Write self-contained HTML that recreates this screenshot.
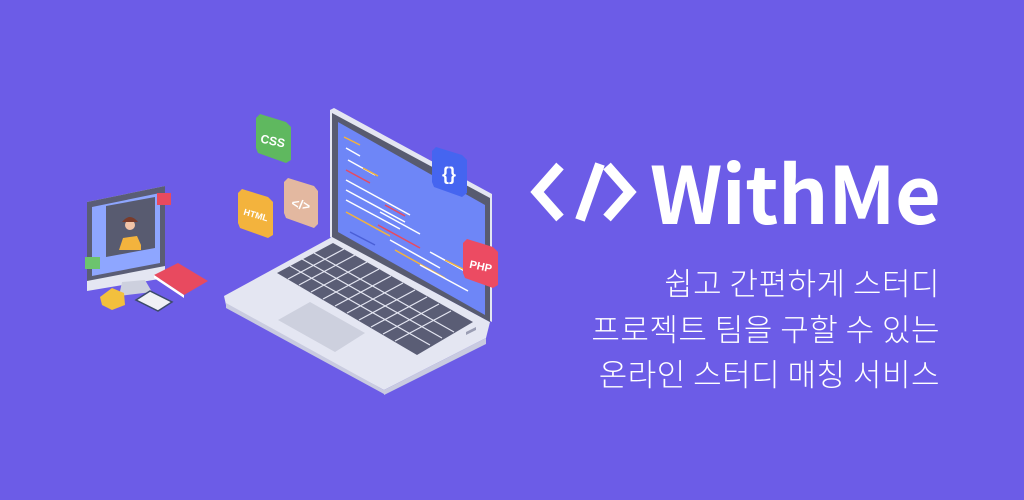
<!DOCTYPE html>
<html><head><meta charset="utf-8"><style>
html,body{margin:0;padding:0}
body{width:1024px;height:500px;background:#6c5ce7;position:relative;overflow:hidden;font-family:"Liberation Sans","Noto Sans CJK KR",sans-serif}
.t{position:absolute;right:84px;color:#fff;font-family:"Noto Sans CJK KR",sans-serif;font-weight:300;font-size:31px;line-height:1;white-space:nowrap;letter-spacing:0.5px}
.logo{position:absolute;left:650px;top:150px;color:#fff;font-family:"Noto Sans CJK KR",sans-serif;font-weight:700;font-size:79px;line-height:1;letter-spacing:-0.5px}
</style></head><body>
<svg width="1024" height="500" style="position:absolute;left:0;top:0">
<g stroke="#fff" stroke-width="10" fill="none" stroke-linecap="butt">
<polyline points="560,166 537,192 560,218"/>
<line x1="600" y1="164" x2="580" y2="220"/>
<polyline points="607,166 630,192 607,218"/>
</g>
<polygon points="224,296 332,237 490,322 486,338 384,390 226,305" fill="#e4e6f2"/>
<polygon points="226,303 384,390 384,394 226,308" fill="#c9cbe0"/>
<polygon points="384,390 486,338 486,344 384,395" fill="#c9cbe0"/>
<polygon points="277,273 333,243 473,322 417,355" fill="#5a5d75"/>
<g stroke="#e4e6f2" stroke-width="1.2">
<line x1="288" y1="279" x2="344" y2="249"/><line x1="299" y1="285" x2="355" y2="255"/><line x1="311" y1="292" x2="367" y2="262"/><line x1="323" y1="299" x2="379" y2="269"/><line x1="335" y1="306" x2="391" y2="276"/><line x1="347" y1="313" x2="403" y2="283"/><line x1="359" y1="320" x2="415" y2="290"/><line x1="371" y1="327" x2="427" y2="297"/><line x1="383" y1="334" x2="439" y2="304"/><line x1="395" y1="341" x2="451" y2="311"/>
<line x1="290" y1="266" x2="430" y2="345"/><line x1="302" y1="259" x2="442" y2="338"/><line x1="314" y1="253" x2="454" y2="332"/>
</g>
<polygon points="278,320 310,302 365,333 335,352" fill="#cdd0de"/>
<polygon points="330,110 334,108 492,194 492,322 330,237" fill="#e4e6f2"/>
<polygon points="332,113 490,198 490,322 332,237" fill="#585b70"/>
<polygon points="338,122 485,205 485,315 338,232" fill="#6e86f7"/>
<g stroke-width="1.5">
<line x1="344" y1="137" x2="360" y2="145" stroke="#f3b33d"/><line x1="346" y1="148" x2="360" y2="156" stroke="#fff"/>
<line x1="348" y1="160" x2="375" y2="175" stroke="#fff"/><line x1="363" y1="168" x2="378" y2="176" stroke="#f3b33d"/>
<line x1="346" y1="170" x2="370" y2="183" stroke="#e84a5f"/><line x1="346" y1="180" x2="410" y2="215" stroke="#fff"/>
<line x1="346" y1="190" x2="405" y2="222" stroke="#fff"/><line x1="385" y1="205" x2="405" y2="216" stroke="#e84a5f"/>
<line x1="346" y1="200" x2="400" y2="229" stroke="#fff"/><line x1="346" y1="212" x2="390" y2="236" stroke="#f3b33d"/>
<line x1="380" y1="212" x2="420" y2="234" stroke="#fff"/><line x1="378" y1="225" x2="420" y2="248" stroke="#e84a5f"/>
<line x1="350" y1="232" x2="375" y2="245" stroke="#4a5fd6"/><line x1="390" y1="240" x2="440" y2="268" stroke="#fff"/>
<line x1="395" y1="250" x2="445" y2="278" stroke="#f3b33d"/><line x1="430" y1="252" x2="470" y2="274" stroke="#fff"/>
<line x1="420" y1="265" x2="468" y2="291" stroke="#fff"/><line x1="445" y1="260" x2="465" y2="270" stroke="#f3b33d"/>
</g>
<polygon points="466,332 476,327 476,330 466,335" fill="#9a9db3"/>
<polygon points="87,202 165,186 165,278 87,291" fill="#e4e6f2"/>
<polygon points="87,202 165,186 165,266 87,281" fill="#5a5d75"/>
<polygon points="92,207 160,193 160,263 92,276" fill="#8ea6ff"/>
<polygon points="106,206 155,197 155,248 106,257" fill="#585b70"/>
<circle cx="130" cy="225" r="5" fill="#f2c4a8"/><path d="M122,222 q8,-10 16,0" fill="#7a3b2a"/>
<polygon points="119,250 123,238 137,236 141,245 141,250" fill="#f3b33d"/>
<polygon points="119,296 122,282 145,280 152,292" fill="#cdd0de"/>
<rect x="157" y="193" width="14" height="12" fill="#e84a5f"/><rect x="85" y="257" width="15" height="12" fill="#6cc46e"/>
<polygon points="154,275 178,263 208,281 184,295" fill="#e84a5f"/>
<polygon points="154,275 184,295 184,298 154,278" fill="#fff"/>
<polygon points="136,300 150,291 172,302 158,311" fill="#f0f0f5" stroke="#3d4b6b" stroke-width="1.5"/>
<polygon points="100,297 112,288 124,293 125,305 112,310 102,305" fill="#f3c03d"/>
<g font-family="Liberation Sans,sans-serif" font-weight="700" fill="#fff" text-anchor="middle">
<polygon points="260,114 286,122 291,127 291,160 286,163 258,153 256,148 256,118" fill="#5fb85f"/>
<text x="272" y="145" font-size="12" transform="rotate(12 272 145)">CSS</text>
<polygon points="242,189 268,197 273,202 273,235 268,238 240,228 238,223 238,193" fill="#f3b33d"/>
<text x="255" y="218" font-size="9" transform="rotate(16 255 218)">HTML</text>
<polygon points="288,178 314,186 318,191 318,224 314,228 286,218 284,213 284,182" fill="#e3b8a0"/>
<text x="300" y="209" font-size="13" transform="rotate(12 300 209)">&lt;/&gt;</text>
<polygon points="436,147 462,155 467,160 467,193 462,197 434,187 432,182 432,151" fill="#4565f0"/>
<text x="449" y="180" font-size="18">{}</text>
<polygon points="467,239 493,247 498,252 498,285 493,288 465,278 463,273 463,243" fill="#ec4b62"/>
<text x="480" y="270" font-size="11" transform="rotate(12 480 270)">PHP</text>
</g>
</svg>
<div class="logo">WithMe</div>
<div class="t" style="top:266px">쉽고 간편하게 스터디</div>
<div class="t" style="top:312px">프로젝트 팀을 구할 수 있는</div>
<div class="t" style="top:357px">온라인 스터디 매칭 서비스</div>
</body></html>
